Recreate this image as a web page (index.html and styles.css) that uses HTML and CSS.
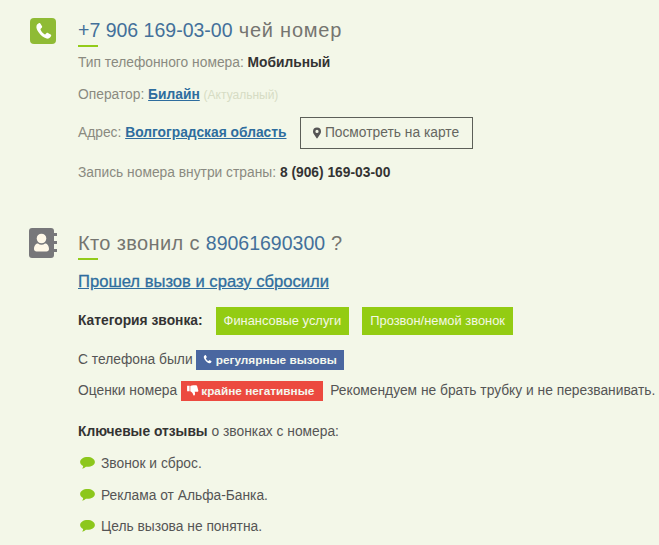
FILE: index.html
```html
<!DOCTYPE html>
<html lang="ru">
<head>
<meta charset="utf-8">
<title>+7 906 169-03-00 чей номер</title>
<link rel="stylesheet" href="styles.css">
</head>
<body>
<main class="page">
  <section class="block block-phone">
    <div class="block-icon icon-phone">
      <svg viewBox="0 0 24 24" width="21" height="21"><path fill="#fff" d="M6.6 2.6c.8-.5 1.5-.4 2 .4l1.700 3c.4.7.3 1.300-.3 1.800l-1.200 1c-.3.3-.3.6-.2 1 .9 2.300 2.400 4.100 4.500 5.400.4.200.7.200 1-.1l1.200-1.200c.6-.5 1.200-.6 1.800-.2l3 1.800c.8.500.9 1.200.4 2-1.200 2-3.100 3.100-5 2.500-3.500-1-6.800-3.600-8.900-6.800C4.500 10.400 3.500 7.500 4 5.600c.3-1.300 1.400-2.300 2.600-3z"/></svg>
    </div>
    <div class="block-body">
      <h1 class="heading heading-phone"><span class="num">+7 906 169-03-00</span> чей номер</h1>
      <p class="line line-type">Тип телефонного номера: <b>Мобильный</b></p>
      <p class="line line-op">Оператор: <a href="#">Билайн</a> <span class="muted">(Актуальный)</span></p>
      <div class="line line-addr">
        <span>Адрес: <a href="#">Волгоградская область</a></span>
        <span class="map-btn">
          <svg viewBox="0 0 10 14" width="8" height="12"><path fill="#555" fill-rule="evenodd" d="M5 0a5 5 0 0 1 5 5c0 1.400-.5 2.200-1 3.200L5.700 13.400a.8.800 0 0 1-1.400 0L1 8.200C.5 7.200 0 6.400 0 5a5 5 0 0 1 5-5zm0 3a2 2 0 1 0 0 4 2 2 0 0 0 0-4z"/></svg>
          Посмотреть на карте
        </span>
      </div>
      <p class="line line-rec">Запись номера внутри страны: <b>8 (906) 169-03-00</b></p>
    </div>
  </section>

  <section class="block block-who">
    <div class="block-icon icon-book">
      <svg viewBox="0 0 28 30" width="28" height="30"><rect x="0" y="0" width="25" height="30" rx="3" fill="#77777a"/><path fill="#77777a" d="M25 5h2.500a1 1 0 0 1 0 3H25zM25 13h2.500a1 1 0 0 1 0 3H25zM25 21h2.500a1 1 0 0 1 0 3H25z"/><circle cx="12.500" cy="10.500" r="4.800" fill="#fff8e8"/><path fill="#fff8e8" d="M5 21c0-3.500 2-5.500 4-5.500 1 .8 2.200 1.200 3.500 1.200s2.500-.4 3.500-1.200c2 0 4 2 4 5.500 0 1.500-1 2.500-2.500 2.500h-10C6 23.500 5 22.500 5 21z"/></svg>
    </div>
    <div class="block-body">
      <h2 class="heading">Кто звонил с <span class="num">89061690300</span> ?</h2>
      <p class="summary"><a href="#">Прошел вызов и сразу сбросили</a></p>
      <div class="cats">
        <b>Категория звонка:</b>
        <span class="tag">Финансовые услуги</span>
        <span class="tag">Прозвон/немой звонок</span>
      </div>
      <p class="dark line-calls">С телефона были <span class="badge badge-blue"><svg viewBox="0 0 24 24" width="11" height="11"><path fill="#fff" d="M6.600 2.600c.8-.5 1.500-.4 2 .4l1.700 3c.4.7.3 1.300-.3 1.800l-1.200 1c-.3.3-.3.6-.2 1 .9 2.300 2.400 4.100 4.500 5.400.4.200.7.200 1-.1l1.200-1.200c.6-.5 1.200-.6 1.800-.2l3 1.800c.8.500.9 1.200.4 2-1.200 2-3.100 3.100-5 2.500-3.500-1-6.800-3.600-8.900-6.800C4.500 10.400 3.500 7.500 4 5.600c.3-1.300 1.400-2.300 2.600-3z"/></svg> регулярные вызовы</span></p>
      <p class="dark line-rate">Оценки номера <span class="badge badge-red"><svg viewBox="0 0 14 13" width="12" height="11"><path fill="#fff" d="M0 1h3v6.500H0zM3.800 1.200C5 .7 6 .4 7.500.4h3c.8 0 1.300.5 1.400 1.100l1.400 5c.2.8-.4 1.500-1.200 1.500H9c.3 1 .5 1.800.4 2.800-.1 1-.7 1.600-1.400 1.600-.5 0-.7-.3-.8-.8-.3-1.500-1.400-3-3.400-4.100z"/></svg> крайне негативные</span> <span class="advice">Рекомендуем не брать трубку и не перезванивать.</span></p>
      <p class="dark line-keys"><b>Ключевые отзывы</b> о звонках с номера:</p>
      <ul class="reviews">
        <li><svg viewBox="0 0 16 13" width="15" height="12"><path fill="#8cc71c" d="M8 0c4.400 0 8 2.300 8 5.300s-3.600 5.300-8 5.300c-.6 0-1.200 0-1.700-.1C5.200 11.600 3.800 12.300 2.200 12.700c.6-.9 1-1.800 1.100-3C1.300 8.700 0 7.100 0 5.300 0 2.300 3.600 0 8 0z"/></svg>Звонок и сброс.</li>
        <li><svg viewBox="0 0 16 13" width="15" height="12"><path fill="#8cc71c" d="M8 0c4.400 0 8 2.300 8 5.300s-3.600 5.300-8 5.300c-.6 0-1.200 0-1.700-.1C5.200 11.600 3.800 12.300 2.200 12.700c.6-.9 1-1.800 1.100-3C1.300 8.700 0 7.100 0 5.300 0 2.300 3.600 0 8 0z"/></svg>Реклама от Альфа-Банка.</li>
        <li><svg viewBox="0 0 16 13" width="15" height="12"><path fill="#8cc71c" d="M8 0c4.400 0 8 2.300 8 5.300s-3.600 5.300-8 5.300c-.6 0-1.200 0-1.700-.1C5.200 11.600 3.800 12.300 2.200 12.700c.6-.9 1-1.800 1.100-3C1.300 8.700 0 7.100 0 5.300 0 2.300 3.600 0 8 0z"/></svg>Цель вызова не понятна.</li>
      </ul>
    </div>
  </section>
</main>
</body>
</html>
```

FILE: styles.css
```css
* { box-sizing: border-box; }
html, body { margin: 0; height: 545px; overflow: hidden; }
body {
  background: #f3f7e8;
  font-family: "Liberation Sans", Arial, sans-serif;
  font-size: 13.8px;
  line-height: 20px;
  color: #8a8a80;
}
.page { padding: 17px 0 0 29px; }
.block { display: flex; }
.block-who { margin-top: 47px; }
.block-icon { flex: 0 0 49px; }
.icon-phone svg { display: block; }
.icon-phone {
  flex: 0 0 26px;
  height: 26px;
  margin-left: 1px;
  margin-right: 22px;
  margin-top: 1px;
  background: #8fbb35;
  border-radius: 4px;
  display: flex;
  align-items: center;
  justify-content: center;
}
.icon-book svg { display: block; margin-top: -2px; }
.block-body { flex: 1; min-width: 0; }
.heading {
  margin: 0;
  font-size: 20px;
  font-weight: 400;
  line-height: 26px;
  height: 29px;
  color: #757570;
  letter-spacing: 0.37px;
  position: relative;
}
.heading-phone { letter-spacing: 0.75px; }
.heading::after {
  content: "";
  position: absolute;
  left: 0;
  bottom: -1px;
  width: 20px;
  height: 2px;
  background: #93cb1a;
}
.num { color: #43709a; font-size: 19.5px; letter-spacing: 0; }
.line { margin: 0; }
.line b { color: #333; }
a { color: #2e6d9e; font-weight: 700; }
.line-type { margin-top: 7px; }
.line-op { margin-top: 12px; }
.muted { color: #d6dcc4; font-size: 12px; }
.line-addr { margin-top: 12px; display: flex; align-items: center; gap: 13px; height: 32px; }
.map-btn {
  width: 173px;
  height: 32px;
  border: 1px solid #5c5f58;
  display: flex;
  align-items: center;
  justify-content: center;
  gap: 4px;
  color: #666660;
}
.line-rec { margin-top: 14px; }
.summary { margin: 12px 0 0; font-size: 16.6px; line-height: 22px; }
.summary a { font-weight: 400; -webkit-text-stroke: 0.3px #2e6d9e; }
.cats {
  margin-top: 14px;
  display: flex;
  align-items: center;
  height: 28px;
  color: #333;
}
.cats b { margin-right: 13px; }
.tag {
  height: 28px;
  padding: 0 8px;
  margin-right: 13px;
  display: flex;
  align-items: center;
  background: #93cc12;
  color: #f4f8e4;
  font-size: 12.9px;
}
.dark { margin: 0; color: #555; }
.dark b { color: #333; }
.badge {
  display: inline-block;
  height: 20px;
  line-height: 20px;
  padding: 0 7px 0 6px;
  color: #f4f7ee;
  font-size: 11.8px;
  font-weight: 700;
  vertical-align: baseline;
}
.badge svg { vertical-align: -1px; margin-right: -1px; }
.badge-blue { background: #4a67a0; }
.badge-red { background: #ec4a3f; padding-right: 9px; margin-right: 3px; }
.line-calls { margin-top: 15px; }
.line-rate { margin-top: 11px; white-space: nowrap; }
.advice { color: #555; }
.line-keys { margin-top: 21px; }
.reviews { list-style: none; margin: 12px 0 0; padding: 0; color: #555; }
.reviews li { height: 20px; margin-bottom: 11.500px; display: flex; align-items: center; }
.reviews svg { margin: -2px 6px 0 2px; flex: none; }
```
